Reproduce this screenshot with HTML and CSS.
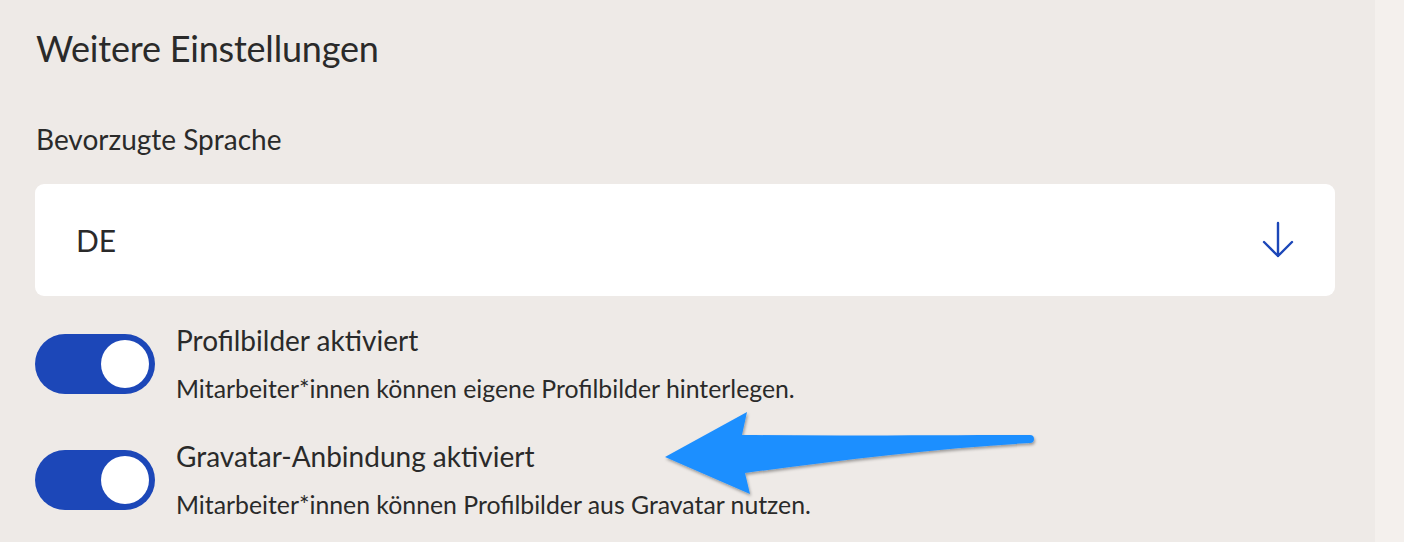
FILE: index.html
```html
<!DOCTYPE html>
<html lang="de">
<head>
<meta charset="utf-8">
<link rel="stylesheet" href="styles.css">
</head>
<body>
<div class="page">
  <main class="panel">
    <h2 class="title">Weitere Einstellungen</h2>
    <label class="label">Bevorzugte Sprache</label>
    <div class="select">
      <span class="select-value">DE</span>
      <svg class="select-arrow" width="34" height="40" viewBox="0 0 34 40">
        <path d="M17 3 V36 M3 22 L17 36 L31 22" fill="none" stroke="#1c47b8" stroke-width="2.4" stroke-linecap="round" stroke-linejoin="round"/>
      </svg>
    </div>
    <div class="toggle-row">
      <div class="toggle"><span class="knob"></span></div>
      <div class="toggle-text">
        <div class="toggle-title">Profilbilder aktiviert</div>
        <div class="toggle-desc">Mitarbeiter*innen können eigene Profilbilder hinterlegen.</div>
      </div>
    </div>
    <div class="toggle-row">
      <div class="toggle"><span class="knob"></span></div>
      <div class="toggle-text">
        <div class="toggle-title">Gravatar-Anbindung aktiviert</div>
        <div class="toggle-desc">Mitarbeiter*innen können Profilbilder aus Gravatar nutzen.</div>
      </div>
    </div>
    <svg class="annotation" width="1404" height="542" viewBox="0 0 1404 542">
      <defs>
        <filter id="sh" x="-10%" y="-20%" width="120%" height="140%">
          <feDropShadow dx="1" dy="2" stdDeviation="1.5" flood-color="#000" flood-opacity="0.35"/>
        </filter>
      </defs>
      <path filter="url(#sh)" fill="#1e8fff" d="M665 457 L747 412 L742 435 C840 436 940 435 1030 435 A4 4 0 0 1 1030 443 C940 448 840 460 745 473 L750 494 Z"/>
    </svg>
  </main>
  <aside class="strip"></aside>
</div>
</body>
</html>
```
FILE: styles.css
```css
html, body {
  margin: 0;
  padding: 0;
}
body {
  background: #eeeae7;
  font-family: "Lato", "Open Sans", sans-serif;
  color: #2a2a2a;
  width: 1404px;
  height: 542px;
  overflow: hidden;
}
.page {
  display: flex;
  height: 542px;
}
.panel {
  width: 1375px;
  box-sizing: border-box;
  padding: 0 40px 0 35px;
  display: flex;
  flex-direction: column;
}
.strip {
  flex: 1;
  background: #f4f0ed;
}
.title {
  margin: 26px 0 0 1px;
  font-size: 36px;
  font-weight: 400;
  line-height: 44px;
  letter-spacing: -0.2px;
}
.label {
  margin: 52px 0 0 1px;
  font-size: 28px;
  line-height: 34px;
}
.select {
  margin-top: 28px;
  height: 112px;
  flex: none;
  background: #fff;
  border-radius: 9px;
  display: flex;
  align-items: center;
  justify-content: space-between;
  padding: 0 40px 0 41px;
}
.select-value {
  font-size: 30px;
  line-height: 36px;
}
.select-arrow {
  display: block;
}
.toggle-row {
  display: flex;
  align-items: flex-start;
  gap: 21px;
  margin-top: 38px;
}
.toggle-row + .toggle-row {
  margin-top: 46px;
}
.toggle {
  width: 120px;
  height: 60px;
  border-radius: 30px;
  background: #1c47b8;
  display: flex;
  align-items: center;
  justify-content: flex-end;
  padding-right: 6px;
  box-sizing: border-box;
  flex: none;
}
.knob {
  width: 48px;
  height: 48px;
  border-radius: 50%;
  background: #fff;
}
.toggle-text {
  margin-top: -11px;
}
.toggle-title {
  font-size: 28px;
  line-height: 34px;
}
.toggle-desc {
  margin-top: 17px;
  font-size: 24.8px;
  line-height: 30px;
}
.annotation {
  position: absolute;
  left: 0;
  top: 0;
  pointer-events: none;
}
```
